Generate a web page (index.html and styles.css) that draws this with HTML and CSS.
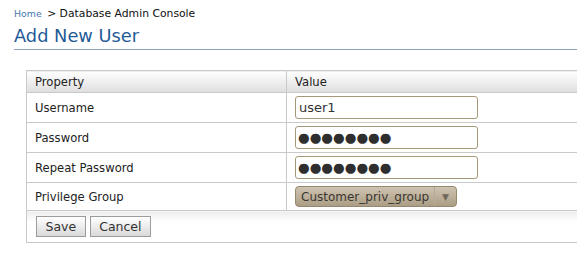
FILE: index.html
```html
<!DOCTYPE html>
<html lang="en">
<head>
  <meta charset="UTF-8" />
  <title>Add New User</title>
  <link rel="stylesheet" href="styles.css">
</head>
<body>
  <div class="page">
    <div class="crumbs">
      <a href="#" class="crumb-home">Home</a>
      <span class="crumb-sep">&gt;</span>
      <span>Database Admin Console</span>
    </div>
    <h1 class="page-title">Add New User</h1>

    <form class="user-form">
      <table class="prop-table">
        <thead>
          <tr>
            <th class="col-prop">Property</th>
            <th>Value</th>
          </tr>
        </thead>
        <tbody>
          <tr>
            <td>Username</td>
            <td><input type="text" class="field" value="user1"></td>
          </tr>
          <tr>
            <td>Password</td>
            <td><input type="text" class="field field-pw" value="●●●●●●●●" aria-label="Password"></td>
          </tr>
          <tr>
            <td>Repeat Password</td>
            <td><input type="text" class="field field-pw" value="●●●●●●●●" aria-label="Repeat Password"></td>
          </tr>
          <tr class="last-row">
            <td>Privilege Group</td>
            <td>
              <span class="dropdown">
                <select class="dropdown-select">
                  <option>Customer_priv_group</option>
                </select>
                <span class="dropdown-arrow">&#9660;</span>
              </span>
            </td>
          </tr>
          <tr class="actions-row">
            <td colspan="2">
              <div class="actions">
                <button type="button" class="btn">Save</button>
                <button type="button" class="btn">Cancel</button>
              </div>
            </td>
          </tr>
        </tbody>
      </table>
    </form>
  </div>
</body>
</html>
```

FILE: styles.css
```css
:root {
  --title-blue: #1f5b97;
  --link-blue: #4a79b2;
  --rule-blue: #8c9fbb;
  --grid: #c9c9c9;
  --text: #222;
  --field-border: #a8987a;
}

* {
  box-sizing: border-box;
}

html, body {
  margin: 0;
  padding: 0;
  overflow: hidden;
  background: #fff;
}

body {
  font-family: "DejaVu Sans", Verdana, sans-serif;
  color: var(--text);
}

.page {
  width: 660px;
  padding: 6px 0 0 14px;
}

.crumbs {
  font-size: 10.8px;
  line-height: 16px;
  color: #111;
}

.crumb-home {
  font-size: 9.4px;
  color: var(--link-blue);
  text-decoration: none;
}

.crumb-sep {
  margin-left: 2px;
}

.page-title {
  margin: 3px 0 0;
  padding-bottom: 2px;
  font-size: 17.8px;
  font-weight: normal;
  line-height: 22px;
  color: var(--title-blue);
  border-bottom: 1px solid var(--rule-blue);
}

.user-form {
  margin: 20px 0 0 12px;
}

.prop-table {
  width: 100%;
  border-collapse: collapse;
  border: 1px solid var(--grid);
  font-size: 11.6px;
}

.prop-table th,
.prop-table td {
  border: 1px solid var(--grid);
  padding: 0 8px;
  text-align: left;
  vertical-align: middle;
}

.prop-table th {
  height: 22px;
  font-weight: normal;
  background: linear-gradient(to bottom, #ffffff, #dedede);
}

.col-prop {
  width: 260px;
}

.prop-table td {
  height: 30px;
}

.prop-table .last-row td {
  height: 28px;
}

.field {
  display: block;
  width: 183px;
  height: 23px;
  margin: 0;
  padding: 0 3px;
  border: 1px solid var(--field-border);
  border-radius: 3px;
  font-family: "DejaVu Sans", sans-serif;
  font-size: 13px;
  color: #333;
  background: #fff;
  outline: none;
}

.field-pw {
  font-size: 13.4px;
  padding-left: 2px;
  color: #2e2e2e;
}

.dropdown {
  display: inline-flex;
  align-items: stretch;
  height: 21px;
  border: 1px solid #958770;
  border-radius: 4px;
  background: linear-gradient(to bottom, #cfc4b1, #ab9d85);
  overflow: hidden;
}

.dropdown-select {
  appearance: none;
  -webkit-appearance: none;
  border: 0;
  margin: 0;
  padding: 0 4px 0 5px;
  background: transparent;
  font-family: "DejaVu Sans", sans-serif;
  font-size: 12px;
  color: #3a3631;
  outline: none;
}

.dropdown-arrow {
  display: flex;
  align-items: center;
  justify-content: center;
  width: 22px;
  border-left: 1px solid #b6aa96;
  font-size: 9px;
  color: #6f675b;
}

.actions-row td {
  height: 32px;
  background: linear-gradient(to bottom, #ececec, #ffffff 10px);
  border-right: 0;
}

.actions {
  display: flex;
  gap: 4px;
  padding-left: 1px;
}

.btn {
  height: 21px;
  margin: 0;
  padding: 0 8.5px;
  border: 1px solid #9c9c9c;
  border-radius: 0;
  background: linear-gradient(to bottom, #ffffff, #d9d9d9);
  font-family: "DejaVu Sans", sans-serif;
  font-size: 12.5px;
  color: #333;
}
```
